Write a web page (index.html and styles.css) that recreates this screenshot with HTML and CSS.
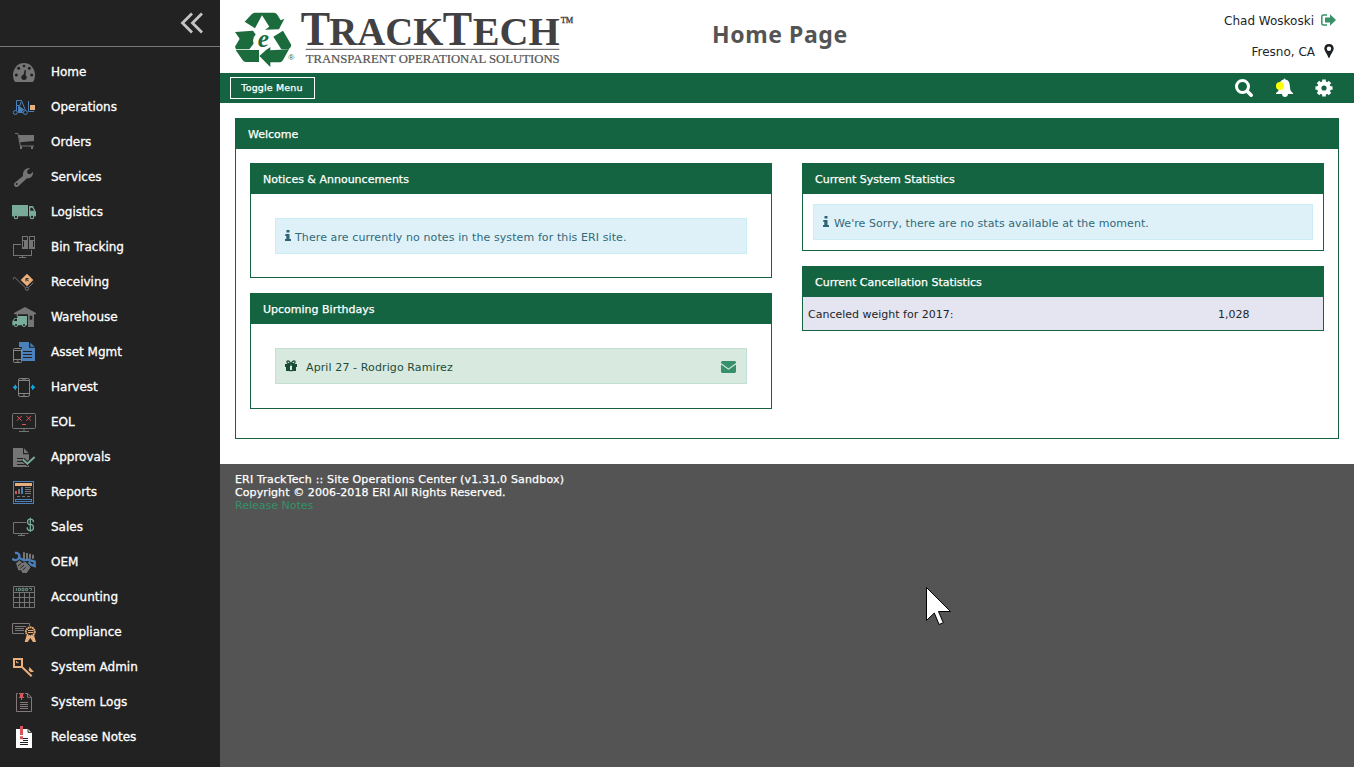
FILE: index.html
```html
<!DOCTYPE html>
<html lang="en">
<head>
<meta charset="utf-8">
<title>TrackTech - Home Page</title>
<link rel="stylesheet" href="styles.css">
</head>
<body>
<div class="layout">
  <aside class="sidebar">
    <div class="sidebar-top">
      <svg class="collapse" viewBox="0 0 24 22" fill="none" stroke="#c4c4c4" stroke-width="2.8"><path d="M12 1.5 2.5 11 12 20.5M22 1.5 12.500 11 22 20.500"/></svg>
    </div>
    <nav class="menu">
      <a class="item"><svg class="mi" viewBox="36 30 72 72"><path fill="#757575" d="M45 96C39 87 38 76 40 66 45 49 57 39 72 39s27 10 32 27c2 10 1 21-5 30z"/><g fill="#222"><circle cx="72" cy="48" r="4"/><circle cx="56" cy="55" r="4.500"/><circle cx="88" cy="55" r="4.500"/><circle cx="49" cy="75" r="4.500"/><circle cx="95" cy="75" r="4.500"/><circle cx="72" cy="82" r="8"/><path d="M69 80 74 60h4l-2 22z"/></g></svg><span>Home</span></a>
      <a class="item"><svg class="mi" viewBox="36 135 72 72"><g fill="none" stroke="#4b80bb" stroke-width="3"><path d="M49.500 182V151.500h15l12 30M49.500 166.500h8v12h10M64 155l-8 20M60 172l12 8M85.500 153v31.500h17M55 187.500h14"/><circle cx="46" cy="187.500" r="6"/><circle cx="76" cy="187.500" r="6"/></g><path fill="#4b80bb" d="M54 169l9 3 8 8-6 6H54z"/><path fill="#e8ae7b" d="M90 165h15v15H90z"/></svg><span>Operations</span></a>
      <a class="item"><svg class="mi" viewBox="36 240 72 72"><path fill="none" stroke="#757575" stroke-width="3" d="M45 250.500h9l7 37.500h41"/><path fill="#757575" d="M56 255h46v18l-42 4z"/><path fill="#757575" d="M60 289h6v8h-6zM93 289h6v8h-6z"/></svg><span>Orders</span></a>
      <a class="item"><svg class="mi" viewBox="36 345 72 72"><path fill="#757575" d="M90 354l-9 9 2 8 8 2 8-8c1 12-5 20-18 20L55 409c-4 4-12 2-13-5 0-3 1-5 4-7l23-19c-2-14 8-25 21-24z"/><circle cx="50" cy="402" r="3" fill="#222"/></svg><span>Services</span></a>
      <a class="item"><svg class="mi" viewBox="36 450 72 72"><g fill="#78ab99"><path d="M36 465h48v34H36zM87 468h12l9 18v13H87z"/><circle cx="48" cy="501" r="7"/><circle cx="96" cy="501" r="7"/></g><path fill="#222" d="M91 473h6l5 9H91z"/><circle cx="48" cy="501" r="3.500" fill="#222"/><circle cx="96" cy="501" r="3.500" fill="#222"/></svg><span>Logistics</span></a>
      <a class="item"><svg class="mi crisp" viewBox="36 30 72 72"><path fill="#757575" d="M66 33h39v39H66z"/><g fill="#222"><path d="M69 36h12v9H69zM90 36h12v9H90zM84 33h3v39h-3zM69 48h2v18h-2zM100 48h2v18h-2z"/></g><path fill="none" stroke="#757575" stroke-width="3" d="M64 58.500H40.500v33h54V76M58 97.500h20M67.500 91v6"/></svg><span>Bin Tracking</span></a>
      <a class="item"><svg class="mi" viewBox="36 135 72 72"><path fill="none" stroke="#757575" stroke-width="3" d="M40 163v-4l4-2 31 30M86 187l14-14"/><circle cx="81" cy="191" r="5" fill="none" stroke="#757575" stroke-width="3"/><path fill="#e8ae7b" d="M81 146l19 19-19 19-19-19z"/><path fill="none" stroke="#222" stroke-width="3" d="M78 169v-8h8M78 161l8 8"/></svg><span>Receiving</span></a>
      <a class="item"><svg class="mi" viewBox="36 240 72 72"><path fill="#757575" d="M42 264l33-18 33 18v4H42zM84 268h18v38H84zM50 268h4v6h-4z"/><path fill="#222" d="M89 272h8v12h-8z"/><g fill="#78ab99"><path d="M52 273h29v28H37v-13l7-9h8z"/><circle cx="48" cy="300" r="6"/><circle cx="72" cy="300" r="6"/></g><path fill="#222" d="M45 281h6v7H41z"/><circle cx="48" cy="300" r="3" fill="#222"/><circle cx="72" cy="300" r="3" fill="#222"/></svg><span>Warehouse</span></a>
      <a class="item"><svg class="mi" viewBox="36 345 72 72"><path fill="#4b80bb" d="M57 351h30v17h18v40H66v-42h-9z"/><path fill="#4b80bb" d="M91 353l13 12H91z"/><path stroke="#222" stroke-width="3" d="M69 379.500h27M69 388.500h27M69 397.500h27"/><rect x="40.500" y="370.500" width="24" height="42" rx="3" fill="#222" stroke="#858585" stroke-width="3"/><path stroke="#858585" stroke-width="3" d="M40 376.500h26M40 403.500h26M50 408h6"/></svg><span>Asset Mgmt</span></a>
      <a class="item"><svg class="mi" viewBox="36 450 72 72"><rect x="55.500" y="460.500" width="33" height="54" rx="5" fill="none" stroke="#858585" stroke-width="3"/><path stroke="#858585" stroke-width="3" d="M57 466.500h30M57 505.500h30M66 462h12M69 510.500h6"/><path fill="#14a5e0" d="M38 487l10-9v6h3v6h-3v6zM106 487l-10-9v6h-3v6h3v6z"/></svg><span>Harvest</span></a>
      <a class="item"><svg class="mi" viewBox="36 30 72 72"><rect x="37.500" y="40.500" width="69" height="45" rx="3" fill="none" stroke="#757575" stroke-width="3"/><path stroke="#757575" stroke-width="3" d="M72 86v9M57 94.500h30"/><path stroke="#d9555d" stroke-width="3" d="M51 48l14 14M65 48 51 62M79 48l14 14M93 48 79 62M66 73.500h12"/></svg><span>EOL</span></a>
      <a class="item"><svg class="mi" viewBox="36 135 72 72"><path fill="#757575" d="M39 144h30v19h18v38H39zM72 145l14 14H72z"/><path stroke="#222" stroke-width="3" d="M51 175.500h18M51 184.500h18M51 193.500h27"/><path fill="none" stroke="#222" stroke-width="12" d="M68 178l14 13 22-20"/><path fill="none" stroke="#78ab99" stroke-width="6" d="M68 178l14 13 22-20"/></svg><span>Approvals</span></a>
      <a class="item"><svg class="mi crisp" viewBox="36 240 72 72"><rect x="40.500" y="244.500" width="60" height="66" fill="none" stroke="#4b80bb" stroke-width="3"/><path fill="#e8ae7b" d="M45 249h51v9H45z"/><path fill="#d9555d" d="M45 273h6v9h-6z"/><path fill="#757575" d="M54 267h6v15h-6z"/><path fill="#4b80bb" d="M63 261h6v21h-6z"/><path stroke="#757575" stroke-width="3" d="M75 262.500h18M75 268.500h18M75 274.500h18M75 280.500h18M51 289.500h9M66 289.500h9M81 289.500h9"/><path fill="none" stroke="#4b80bb" stroke-width="3" d="M46.500 298.500h48v6h-48z"/></svg><span>Reports</span></a>
      <a class="item"><svg class="mi" viewBox="36 345 72 72"><path fill="none" stroke="#757575" stroke-width="3" d="M79 367.500H40.500v33H86M64.500 400v6M54 406.500h21"/><path fill="none" stroke="#78ab99" stroke-width="4" d="M100 367v-5l-4-4H86l-3 4v8l4 4h9l4 5v8l-4 4H86l-4-4v-5M91 353v43"/></svg><span>Sales</span></a>
      <a class="item"><svg class="mi" viewBox="36 450 72 72"><path fill="#757575" d="M69 457h6v20h-6zM78 459h6v18h-6zM87 461h6v15h-6zM96 464h6v12h-6zM48 490l11-9 8 8 9-4 16 17-12 17H68l-5-8h-8z"/><path fill="none" stroke="#222" stroke-width="3" d="M54 498l10-8M61 505l11-10M68 510l9-8"/><path fill="none" stroke="#4b80bb" stroke-width="7" d="M45 459c8-2 16 5 12 14 -4 10-14 9-20 3M58 474l14 7 12-2 20 6v13l-11-4-7-8"/></svg><span>OEM</span></a>
      <a class="item"><svg class="mi" viewBox="36 30 72 72"><path fill="#222" stroke="#757575" stroke-width="3" d="M40.500 34.500h63v63h-63zM42 52.500h60M42 67.500h60M42 82.500h60M58.500 54v43M73.500 54v43M88.500 54v43"/><path fill="none" stroke="#78ab99" stroke-width="2.500" d="M49 39v9M55 40h6v7h-6zM66 40h6v7h-6zM77 40h6v7h-6zM87 40h8v3l-3 5"/></svg><span>Accounting</span></a>
      <a class="item"><svg class="mi" viewBox="36 135 72 72"><path fill="none" stroke="#7f7678" stroke-width="3" d="M72 175.500H37.500v-30h51v8M45 154.500h33M45 160.500h27M45 166.500h27"/><path fill="#e8ae7b" d="M80 181l-6 20h9l8-12 8 12h9l-6-20z"/><circle cx="91" cy="170" r="13" fill="#222" stroke="#e8ae7b" stroke-width="6" stroke-dasharray="5 1.500"/><path stroke="#e8ae7b" stroke-width="3" d="M84 166.500h15M84 172.500h15"/></svg><span>Compliance</span></a>
      <a class="item"><svg class="mi" viewBox="36 240 72 72"><path fill="none" stroke="#e8ae7b" stroke-width="6" d="M42 252h24v24H42zM66 276l29 28"/><path fill="none" stroke="#e8ae7b" stroke-width="3" d="M49.500 258v5h6"/><path fill="#e8ae7b" d="M88 276l14 14-10 2-6-6z"/></svg><span>System Admin</span></a>
      <a class="item"><svg class="mi" viewBox="36 345 72 72"><path fill="none" stroke="#84787a" stroke-width="3" d="M54 355.500h-4.500v54h45V367l-11.500-11.500H75M82.500 355v12h12M60 382.500h24M60 388.500h24M60 394.500h24M60 400.500h24"/><path fill="#d9555d" d="M57 354h15v4h-3v6l4 5h-7v6h-3v-6h-7l4-5v-6h-3z"/></svg><span>System Logs</span></a>
      <a class="item"><svg class="mi" viewBox="36 450 72 72"><path fill="#fff" d="M48 462h36l12 12v45H48z"/><path fill="none" stroke="#222" stroke-width="3" d="M84 463v9h11M69 490.500h15M69 496.500h15M60 502.500h24M60 508.500h24"/><path fill="#d9555d" d="M60 453h9v27h-9zM60 484h9v9h-9z"/></svg><span>Release Notes</span></a>
    </nav>
  </aside>
  <div class="page">
    <header class="header">
      <svg class="logo" viewBox="39 24 1023 180">
        <g fill="#1b6b3c">
          <path d="M106 38h56c5 0 8 3 11 8l9 15 11-5-16 32-42 1 13-9-22-34-21 39-31-20 21-22c3-3 6-5 11-5z"/>
          <path d="M45 96l54-4 22 32-12-4-21 28H48l-3-8 14-24z"/>
          <path d="M47 150h70v36H78c-6 0-9-3-12-8z"/>
          <path d="M160 110l29-18 23 39c2 4 2 6 0 10l-6 7h-22z"/>
          <path d="M207 148l-18 32c-3 5-6 7-11 7h-27v14l-33-33 33-29v12z"/>
        </g>
        <ellipse cx="130" cy="122" rx="31" ry="27" fill="#fff"/>
        <text x="130" y="140" class="logo-e">e</text>
        <text x="205" y="180" class="logo-r">®</text>
        <text y="135" class="logo-name"><tspan x="242" class="big" textLength="88" lengthAdjust="spacingAndGlyphs">T</tspan><tspan x="328" textLength="342" lengthAdjust="spacingAndGlyphs">RACK</tspan><tspan x="668" class="big" textLength="88" lengthAdjust="spacingAndGlyphs">T</tspan><tspan x="758" textLength="261" lengthAdjust="spacingAndGlyphs">ECH</tspan></text>
        <path stroke="#555" stroke-width="3" d="M257 148h761"/>
        <text x="257" y="188" class="logo-tag" textLength="762" lengthAdjust="spacingAndGlyphs">TRANSPARENT OPERATIONAL SOLUTIONS</text>
        <text x="1022" y="68" class="logo-tm" textLength="38" lengthAdjust="spacingAndGlyphs">TM</text>
      </svg>
      <h1 class="title">Home Page</h1>
      <div class="user">
        <div class="user-row"><span>Chad Woskoski</span><svg class="ui" viewBox="0 0 15 12"><path fill="none" stroke="#3a9168" stroke-width="1.500" d="M6 1H2.500C1.300 1 .8 1.500.8 2.500v7c0 1 .5 1.500 1.700 1.500H6"/><path fill="#3a9168" d="M4 3.500h5V.3L15 6 9 11.700V8.500H4z"/></svg></div>
        <div class="user-row"><span>Fresno, CA</span><svg class="ui pin" viewBox="0 0 10 14"><path fill="#1d2124" fill-rule="evenodd" d="M5 0C2 0 .3 2.100.3 4.600.3 7 3.500 10.500 4.200 13.300c.2.700 1.400.7 1.600 0C6.500 10.500 9.700 7 9.700 4.600 9.700 2.100 8 0 5 0zm0 2.500a2.200 2.200 0 1 1 0 4.400 2.200 2.200 0 0 1 0-4.400z"/></svg></div>
      </div>
    </header>
    <div class="toolbar">
      <button class="toggle">Toggle Menu</button>
      <div class="tools">
        <svg class="tool" viewBox="0 0 20 20"><circle cx="8.500" cy="8.500" r="6" fill="none" stroke="#fff" stroke-width="3"/><path stroke="#fff" stroke-width="3.600" stroke-linecap="round" d="M13.500 13.500l3.700 3.700"/></svg>
        <svg class="tool" viewBox="0 0 20 20"><path fill="#fff" d="M9.500 1.500l1-1.200 1 1.200c4 1 4.300 4 4.500 8 .1 3 1 4 3 5.500v1h-5c0 2-1.500 3-3 3s-3-1-3-3H2v-1c3-2 3.200-4 3.500-8C5.700 4 7 2 9.500 1.500z"/><circle cx="6" cy="8" r="4" fill="#ff0"/></svg>
        <svg class="tool" viewBox="0 0 20 20"><circle cx="10" cy="10" r="4.700" fill="none" stroke="#fff" stroke-width="4.200"/><path stroke="#fff" stroke-width="3.600" d="M10 1.500v3M10 15.500v3M1.500 10h3M15.500 10h3M4 4l2 2M14 14l2 2M16 4l-2 2M6 14l-2 2"/></svg>
      </div>
    </div>
    <main class="main">
      <section class="panel welcome">
        <h2 class="panel-title">Welcome</h2>
        <div class="columns">
          <div class="column">
            <section class="panel">
              <h2 class="panel-title">Notices &amp; Announcements</h2>
              <div class="roomy"><div class="alert info"><svg class="info-i" viewBox="0 0 6 11"><path fill="#2f6477" d="M1.500 0h3v2.500h-3zM.3 4h4.200v5H6v2H0V9h1.300V6h-1z"/></svg><span class="t-notes">There are currently no notes in the system for this ERI site.</span></div></div>
            </section>
            <section class="panel">
              <h2 class="panel-title">Upcoming Birthdays</h2>
              <div class="roomy last"><div class="alert birthday"><svg class="gift" viewBox="0 0 12 12"><path fill="#1a4b37" d="M0 4h5v3H0zM7 4h5v3H7zM1 7h4v4H1zM7 7h4v4H7zM4.500 10h3v1.300h-3zM5.300 4h1.400v2H5.300z"/><path fill="none" stroke="#1a4b37" stroke-width="1.200" d="M6 4C5 1.500 4 .8 3 .8 1.500.8 1.500 3.500 3.500 3.500H8.500C10.500 3.500 10.500.8 9 .8 8 .8 7 1.500 6 4z"/></svg><span class="t-birth">April 27 - Rodrigo Ramirez</span><svg class="mail" viewBox="0 0 15 12"><path fill="#36916a" d="M1 0h13l1 1v1L7.500 7.500 0 2V1zM0 3.500l7.500 5.300L15 3.500V11l-1 1H1l-1-1z"/></svg></div></div>
            </section>
          </div>
          <div class="column">
            <section class="panel">
              <h2 class="panel-title">Current System Statistics</h2>
              <div class="snug"><div class="alert info"><svg class="info-i" viewBox="0 0 6 11"><path fill="#2f6477" d="M1.500 0h3v2.500h-3zM.3 4h4.200v5H6v2H0V9h1.300V6h-1z"/></svg><span class="t-stats">We're Sorry, there are no stats available at the moment.</span></div></div>
            </section>
            <section class="panel">
              <h2 class="panel-title">Current Cancellation Statistics</h2>
              <div class="stat"><span>Canceled weight for 2017:</span><span>1,028</span></div>
            </section>
          </div>
        </div>
      </section>
    </main>
    <footer class="footer">
      <div class="f1">ERI TrackTech :: Site Operations Center (v1.31.0 Sandbox)</div>
      <div class="f2">Copyright © 2006-2018 ERI All Rights Reserved.</div>
      <a class="notes">Release Notes</a>
    </footer>
  </div>
</div>
<svg class="cursor" viewBox="0 0 26 40"><path fill="#fff" stroke="#000" d="M.5.5v33l7.800-7.500 4.800 11.500 4.200-1.800-4.800-11.200h12z"/></svg>
</body>
</html>
```

FILE: styles.css
```css
* { box-sizing: border-box; }
body { margin: 0; font: 11px/13px "DejaVu Sans", Verdana, sans-serif; color: #212529; background: #545454; overflow: hidden; }
.layout { display: flex; height: 767px; }
.sidebar { width: 220px; flex: none; background: #222; }
.sidebar-top { height: 47px; border-bottom: 1px solid #777; display: flex; justify-content: flex-end; padding: 12px 16px 0 0; }
.collapse { width: 24px; height: 22px; }
.menu { padding-top: 7px; }
.item { display: flex; height: 35px; padding: 6px 0 0 12px; gap: 15px; color: #fff; font-size: 12px; line-height: 25px; -webkit-text-stroke: .3px #fff; }
.mi { width: 24px; height: 24px; flex: none; -webkit-text-stroke: 0; }
.crisp { shape-rendering: crispEdges; }
.page { flex: 1; display: flex; flex-direction: column; }
.header { height: 73px; background: #fff; display: flex; padding: 8px 18px 0 13px; }
.logo { width: 341px; height: 60px; flex: none; overflow: visible; }
.logo-name { font: bold 123px "Liberation Serif", serif; fill: #414042; }
.big { font-size: 147px; }
.logo-tag { font: 39px "Liberation Serif", serif; fill: #555; stroke: #555; stroke-width: .7px; }
.logo-tm { font: 24px "Liberation Serif", serif; fill: #414042; stroke: #414042; stroke-width: 1px; }
.logo-e { font: italic bold 76px "Liberation Serif", serif; fill: #1b6b3c; text-anchor: middle; }
.logo-r { font: 24px "Liberation Sans", sans-serif; fill: #1b6b3c; }
.title { margin: 10px 0 0 138px; font: bold 23px/32px "Noto Sans", sans-serif; letter-spacing: .6px; color: #545454; white-space: nowrap; }
.user { margin-left: auto; font-size: 12px; }
.user-row { display: flex; justify-content: flex-end; align-items: center; gap: 7px; height: 25px; margin-bottom: 6px; }
.user-row span { padding-top: 1px; }
.ui { width: 15px; height: 12px; margin-bottom: 2px; }
.user-row .pin { width: 10px; height: 14px; margin: 0 2px 2px 2px; }
.toolbar { height: 30px; background: #146441; display: flex; justify-content: space-between; padding: 4px 20px 0 10px; }
.toggle { width: 85px; height: 22px; padding: 0 1px 0 0; border: 1px solid #fff; background: none; color: #fff; font: 9.5px/18px "DejaVu Sans", Verdana, sans-serif; letter-spacing: .15px; -webkit-text-stroke: .25px #fff; }
.tools { display: flex; gap: 20px; }
.tool { width: 20px; height: 20px; margin-top: 1px; }
.main { background: #fff; padding: 15px 15px 25px; height: 361px; }
.panel { border: 1px solid #146441; }
.welcome { height: 321px; }
.panel-title { margin: 0; height: 30px; padding-left: 12px; background: #146441; color: #fff; font-size: 11px; font-weight: normal; line-height: 31px; -webkit-text-stroke: .25px #fff; }
.columns { display: grid; grid-template-columns: 1fr 1fr; gap: 30px; padding: 14px; }
.column { display: flex; flex-direction: column; gap: 15px; }
.roomy { padding: 24px 24px 23px; }
.last { padding-bottom: 24px; }
.snug { padding: 10px; }
.alert { height: 36px; display: flex; align-items: center; padding: 2px 9px 0; }
.info { background: #dff1f8; border: 1px solid #cbedf5; color: #31697a; gap: 4px; }
.info-i { width: 6px; height: 11px; margin-bottom: 3px; }
.t-notes { letter-spacing: .1px; }
.t-stats { letter-spacing: .07px; padding-left: 1px; }
.t-birth { letter-spacing: .11px; }
.birthday { background: #d8e9e0; border: 1px solid #c4dfd5; color: #1b4c38; gap: 9px; }
.gift { width: 12px; height: 12px; margin-bottom: 3px; }
.mail { width: 15px; height: 12px; margin: 0 1px 1px auto; }
.stat { height: 33px; background: #e5e5f1; display: grid; grid-template-columns: 410px 1fr; padding: 1px 5px 0; line-height: 34px; }
.footer { padding: 9px 15px; color: #fff; }
.f1, .f2 { -webkit-text-stroke: .25px #fff; }
.f1 { letter-spacing: .17px; }
.f2 { letter-spacing: .09px; }
.notes { color: #36916a; display: block; }
.cursor { position: absolute; left: 926px; top: 587px; width: 26px; height: 40px; }
```
